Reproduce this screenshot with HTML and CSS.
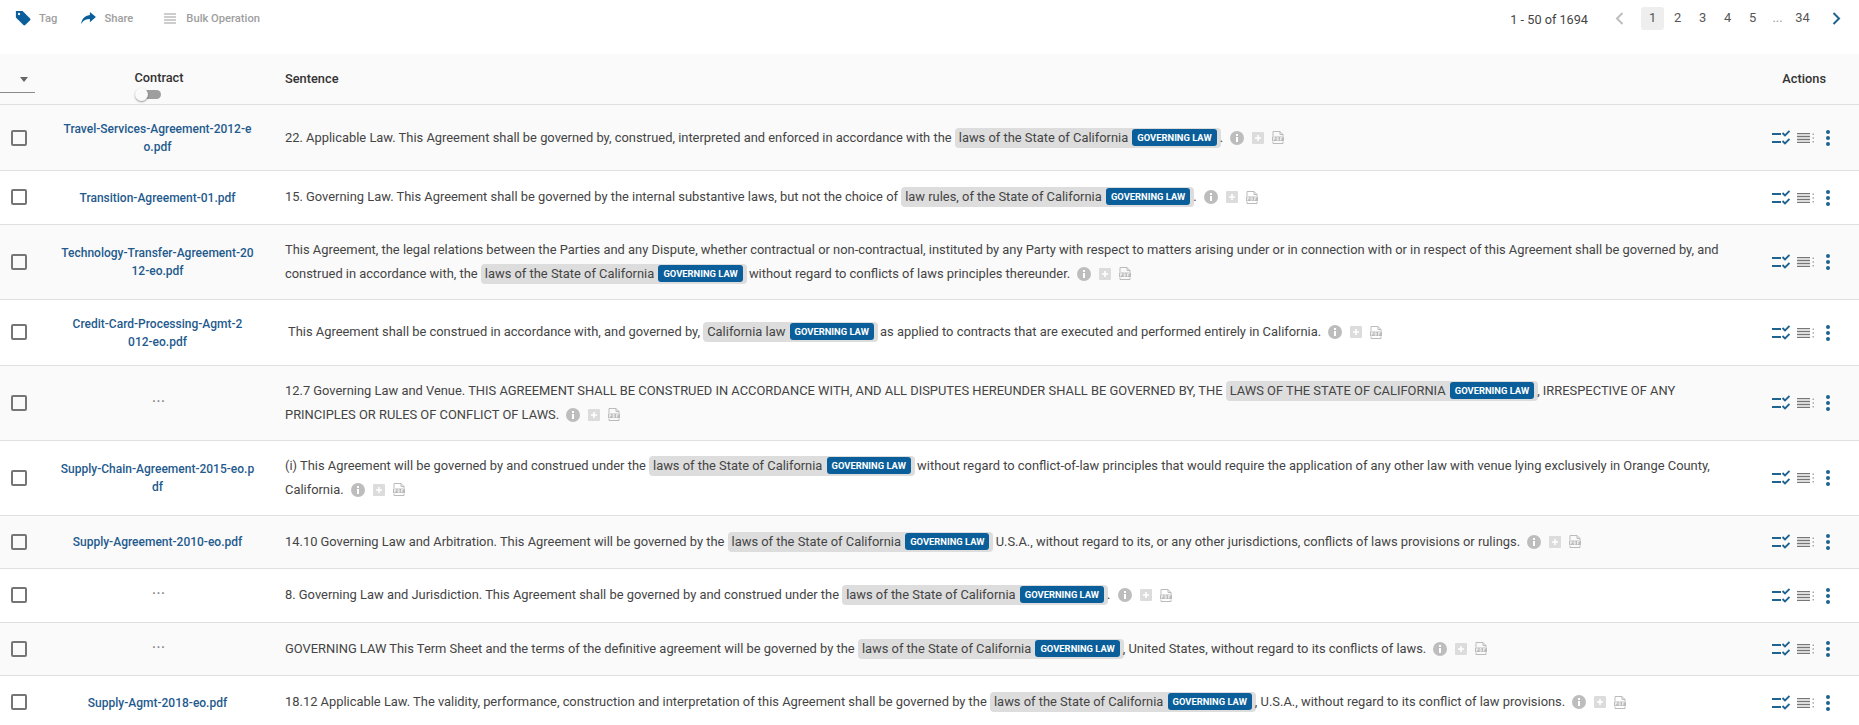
FILE: index.html
```html
<!DOCTYPE html>
<html lang="en">
<head>
    <meta charset="UTF-8">
    <meta name="viewport" content="width=device-width, initial-scale=1.0">
    <title>Contract Sentences</title>
    <link rel="stylesheet" href="styles.css">
</head>
<body>
    <svg class="defs" width="0" height="0">
        <symbol id="i-check" viewBox="0 0 18 16">
            <path d="M0 4h9M0 12h9" fill="none" stroke="currentColor" stroke-width="2"/>
            <path d="M10.500 3l2.500 2.500 4.500-4.500M10.500 11l2.500 2.500 4.500-4.500" fill="none" stroke="currentColor" stroke-width="1.800"/>
        </symbol>
        <symbol id="i-lines" viewBox="0 0 17 10">
            <path d="M0 .5h13M0 3.500h13M0 6.500h13M0 9.500h13" fill="none" stroke="#777" stroke-width="1.300"/>
            <path d="M15.500 .5h1.500v1.500h-1.500zM15.500 4.200h1.500v1.500h-1.500zM15.500 8h1.500v1.500h-1.500z" fill="#aaa"/>
        </symbol>
        <symbol id="i-dots" viewBox="0 0 6 16">
            <circle cx="3" cy="2" r="2" fill="currentColor"/>
            <circle cx="3" cy="8" r="2" fill="currentColor"/>
            <circle cx="3" cy="14" r="2" fill="currentColor"/>
        </symbol>
        <symbol id="i-info" viewBox="0 0 14 14">
            <circle cx="7" cy="7" r="7" fill="#bdbdbd"/>
            <path d="M6 6h2v5H6zM6 3h2v2H6z" fill="#fff"/>
        </symbol>
        <symbol id="i-plus" viewBox="0 0 12 12">
            <rect width="12" height="12" rx="1" fill="#dcdcdc"/>
            <path d="M6 3v6M3 6h6" stroke="#fff" stroke-width="1.600"/>
        </symbol>
        <symbol id="i-pdf" viewBox="0 0 12 13">
            <path d="M1 5V.5h7l3 3V5M1 10.500v2h10v-2M8 .5v3h3" fill="none" stroke="#bbb" stroke-width="1"/>
            <rect y="5.500" width="12" height="4.500" fill="#bbb"/>
            <path d="M1.500 6.500v3M1.500 6.700h1.500v1.200H1.500M5 6.500v2.700h1.200V6.700zM8.500 9.500v-3h2M8.500 8h1.500" fill="none" stroke="#fff" stroke-width=".7"/>
        </symbol>
    </svg>

    <div class="page">
        <div class="toolbar">
            <div class="tools">
                <span class="tool tool-tag">
                    <svg class="tool-icon" width="16" height="16" viewBox="0 0 18 18"><path d="M1 1h7.500l8.500 8.500a1.500 1.500 0 0 1 0 2L11.500 17a1.500 1.500 0 0 1-2 0L1 8.500zM4.500 3.200a1.300 1.300 0 1 0 .01 0z" fill="#0a5f9b" fill-rule="evenodd"/></svg>
                    Tag
                </span>
                <span class="tool tool-share">
                    <svg class="tool-icon" width="15" height="12" viewBox="0 0 16 13"><path d="M9.500 0L16 5.500 9.500 11V7.700C5.500 7.700 2.500 9 0 13 .7 8 3.500 4 9.500 3.300z" fill="#0a5f9b"/></svg>
                    Share
                </span>
                <span class="tool tool-bulk">
                    <svg class="tool-icon" width="12" height="11" viewBox="0 0 13 12"><path d="M0 1h13M0 4.300h13M0 7.600h13M0 11h13" stroke="#bdbdbd" stroke-width="1.600"/></svg>
                    Bulk Operation
                </span>
            </div>
            <div class="pager">
                <span class="pager-count">1 - 50 of 1694</span>
                <svg class="chev" width="9" height="13" viewBox="0 0 9 13"><path d="M7.500 1L2 6.500 7.500 12" fill="none" stroke="#bdbdbd" stroke-width="2"/></svg>
                <span class="page-no active">1</span>
                <span class="page-no">2</span>
                <span class="page-no">3</span>
                <span class="page-no">4</span>
                <span class="page-no">5</span>
                <span class="page-no faint">...</span>
                <span class="page-no">34</span>
                <svg class="chev chev-next" width="9" height="13" viewBox="0 0 9 13"><path d="M1.500 1L7 6.500 1.500 12" fill="none" stroke="#1f6391" stroke-width="2"/></svg>
            </div>
        </div>

        <table class="grid">
            <colgroup>
                <col class="col-check">
                <col class="col-contract">
                <col>
                <col class="col-actions">
            </colgroup>
            <thead>
                <tr>
                    <th class="head-select"><div class="select-box"><span class="caret"></span></div></th>
                    <th class="head-contract">
                        <div>Contract</div>
                        <span class="toggle"><span class="knob"></span></span>
                    </th>
                    <th class="head-sentence">Sentence</th>
                    <th class="head-actions">Actions</th>
                </tr>
            </thead>
            <tbody>
                <tr>
                    <td><span class="checkbox"></span></td>
                    <td class="file">Travel-Services-Agreement-2012-eo.pdf</td>
                    <td class="sentence">22. Applicable Law. This Agreement shall be governed by, construed, interpreted and enforced in accordance with the <span class="hit">laws of the State of California <span class="badge">GOVERNING LAW</span></span>. <span class="marks"><svg width="14" height="14"><use href="#i-info"/></svg><svg width="12" height="12"><use href="#i-plus"/></svg><svg width="12" height="13"><use href="#i-pdf"/></svg></span></td>
                    <td class="actions"><svg class="act" width="18" height="16"><use href="#i-check"/></svg><svg class="act-lines" width="17" height="10"><use href="#i-lines"/></svg><svg class="act-dots" width="6" height="16"><use href="#i-dots"/></svg></td>
                </tr>
                <tr>
                    <td><span class="checkbox"></span></td>
                    <td class="file">Transition-Agreement-01.pdf</td>
                    <td class="sentence">15. Governing Law. This Agreement shall be governed by the internal substantive laws, but not the choice of <span class="hit">law rules, of the State of California <span class="badge">GOVERNING LAW</span></span>. <span class="marks"><svg width="14" height="14"><use href="#i-info"/></svg><svg width="12" height="12"><use href="#i-plus"/></svg><svg width="12" height="13"><use href="#i-pdf"/></svg></span></td>
                    <td class="actions"><svg class="act" width="18" height="16"><use href="#i-check"/></svg><svg class="act-lines" width="17" height="10"><use href="#i-lines"/></svg><svg class="act-dots" width="6" height="16"><use href="#i-dots"/></svg></td>
                </tr>
                <tr>
                    <td><span class="checkbox"></span></td>
                    <td class="file">Technology-Transfer-Agreement-2012-eo.pdf</td>
                    <td class="sentence">This Agreement, the legal relations between the Parties and any Dispute, whether contractual or non-contractual, instituted by any Party with respect to matters arising under or in connection with or in respect of this Agreement shall be governed by, and construed in accordance with, the <span class="hit">laws of the State of California <span class="badge">GOVERNING LAW</span></span> without regard to conflicts of laws principles thereunder. <span class="marks"><svg width="14" height="14"><use href="#i-info"/></svg><svg width="12" height="12"><use href="#i-plus"/></svg><svg width="12" height="13"><use href="#i-pdf"/></svg></span></td>
                    <td class="actions"><svg class="act" width="18" height="16"><use href="#i-check"/></svg><svg class="act-lines" width="17" height="10"><use href="#i-lines"/></svg><svg class="act-dots" width="6" height="16"><use href="#i-dots"/></svg></td>
                </tr>
                <tr>
                    <td><span class="checkbox"></span></td>
                    <td class="file">Credit-Card-Processing-Agmt-2<br>012-eo.pdf</td>
                    <td class="sentence sentence-indent">This Agreement shall be construed in accordance with, and governed by, <span class="hit">California law <span class="badge">GOVERNING LAW</span></span> as applied to contracts that are executed and performed entirely in California. <span class="marks"><svg width="14" height="14"><use href="#i-info"/></svg><svg width="12" height="12"><use href="#i-plus"/></svg><svg width="12" height="13"><use href="#i-pdf"/></svg></span></td>
                    <td class="actions"><svg class="act" width="18" height="16"><use href="#i-check"/></svg><svg class="act-lines" width="17" height="10"><use href="#i-lines"/></svg><svg class="act-dots" width="6" height="16"><use href="#i-dots"/></svg></td>
                </tr>
                <tr>
                    <td><span class="checkbox"></span></td>
                    <td class="file no-name">...</td>
                    <td class="sentence">12.7 Governing Law and Venue. THIS AGREEMENT SHALL BE CONSTRUED IN ACCORDANCE WITH, AND ALL DISPUTES HEREUNDER SHALL BE GOVERNED BY, THE <span class="hit">LAWS OF THE STATE OF CALIFORNIA <span class="badge">GOVERNING LAW</span></span>, IRRESPECTIVE OF ANY PRINCIPLES OR RULES OF CONFLICT OF LAWS. <span class="marks"><svg width="14" height="14"><use href="#i-info"/></svg><svg width="12" height="12"><use href="#i-plus"/></svg><svg width="12" height="13"><use href="#i-pdf"/></svg></span></td>
                    <td class="actions"><svg class="act" width="18" height="16"><use href="#i-check"/></svg><svg class="act-lines" width="17" height="10"><use href="#i-lines"/></svg><svg class="act-dots" width="6" height="16"><use href="#i-dots"/></svg></td>
                </tr>
                <tr>
                    <td><span class="checkbox"></span></td>
                    <td class="file">Supply-Chain-Agreement-2015-eo.pdf</td>
                    <td class="sentence">(i) This Agreement will be governed by and construed under the <span class="hit">laws of the State of California <span class="badge">GOVERNING LAW</span></span> without regard to conflict-of-law principles that would require the application of any other law with venue lying exclusively in Orange County, California. <span class="marks"><svg width="14" height="14"><use href="#i-info"/></svg><svg width="12" height="12"><use href="#i-plus"/></svg><svg width="12" height="13"><use href="#i-pdf"/></svg></span></td>
                    <td class="actions"><svg class="act" width="18" height="16"><use href="#i-check"/></svg><svg class="act-lines" width="17" height="10"><use href="#i-lines"/></svg><svg class="act-dots" width="6" height="16"><use href="#i-dots"/></svg></td>
                </tr>
                <tr>
                    <td><span class="checkbox"></span></td>
                    <td class="file">Supply-Agreement-2010-eo.pdf</td>
                    <td class="sentence">14.10 Governing Law and Arbitration. This Agreement will be governed by the <span class="hit">laws of the State of California <span class="badge">GOVERNING LAW</span></span> U.S.A., without regard to its, or any other jurisdictions, conflicts of laws provisions or rulings. <span class="marks"><svg width="14" height="14"><use href="#i-info"/></svg><svg width="12" height="12"><use href="#i-plus"/></svg><svg width="12" height="13"><use href="#i-pdf"/></svg></span></td>
                    <td class="actions"><svg class="act" width="18" height="16"><use href="#i-check"/></svg><svg class="act-lines" width="17" height="10"><use href="#i-lines"/></svg><svg class="act-dots" width="6" height="16"><use href="#i-dots"/></svg></td>
                </tr>
                <tr>
                    <td><span class="checkbox"></span></td>
                    <td class="file no-name">...</td>
                    <td class="sentence">8. Governing Law and Jurisdiction. This Agreement shall be governed by and construed under the <span class="hit">laws of the State of California <span class="badge">GOVERNING LAW</span></span>. <span class="marks"><svg width="14" height="14"><use href="#i-info"/></svg><svg width="12" height="12"><use href="#i-plus"/></svg><svg width="12" height="13"><use href="#i-pdf"/></svg></span></td>
                    <td class="actions"><svg class="act" width="18" height="16"><use href="#i-check"/></svg><svg class="act-lines" width="17" height="10"><use href="#i-lines"/></svg><svg class="act-dots" width="6" height="16"><use href="#i-dots"/></svg></td>
                </tr>
                <tr>
                    <td><span class="checkbox"></span></td>
                    <td class="file no-name">...</td>
                    <td class="sentence">GOVERNING LAW This Term Sheet and the terms of the definitive agreement will be governed by the <span class="hit">laws of the State of California <span class="badge">GOVERNING LAW</span></span>, United States, without regard to its conflicts of laws. <span class="marks"><svg width="14" height="14"><use href="#i-info"/></svg><svg width="12" height="12"><use href="#i-plus"/></svg><svg width="12" height="13"><use href="#i-pdf"/></svg></span></td>
                    <td class="actions"><svg class="act" width="18" height="16"><use href="#i-check"/></svg><svg class="act-lines" width="17" height="10"><use href="#i-lines"/></svg><svg class="act-dots" width="6" height="16"><use href="#i-dots"/></svg></td>
                </tr>
                <tr>
                    <td><span class="checkbox"></span></td>
                    <td class="file">Supply-Agmt-2018-eo.pdf</td>
                    <td class="sentence">18.12 Applicable Law. The validity, performance, construction and interpretation of this Agreement shall be governed by the <span class="hit">laws of the State of California <span class="badge">GOVERNING LAW</span></span>, U.S.A., without regard to its conflict of law provisions. <span class="marks"><svg width="14" height="14"><use href="#i-info"/></svg><svg width="12" height="12"><use href="#i-plus"/></svg><svg width="12" height="13"><use href="#i-pdf"/></svg></span></td>
                    <td class="actions"><svg class="act" width="18" height="16"><use href="#i-check"/></svg><svg class="act-lines" width="17" height="10"><use href="#i-lines"/></svg><svg class="act-dots" width="6" height="16"><use href="#i-dots"/></svg></td>
                </tr>
            </tbody>
        </table>
    </div>
</body>
</html>
```
FILE: styles.css
```css
html, body {
    margin: 0;
    padding: 0;
    background-color: #fff;
}
body {
    font-family: Roboto, "Liberation Sans", sans-serif;
    font-size: 12.9px;
    color: #444;
}
.defs {
    position: absolute;
}
.page {
    height: 725px;
    overflow: hidden;
}

/* top bar */
.toolbar {
    display: flex;
    justify-content: space-between;
    align-items: flex-start;
    height: 54px;
}
.tools {
    display: flex;
    align-items: center;
    height: 36px;
    padding-left: 15px;
    color: #9e9e9e;
    font-size: 11.2px;
    font-weight: 500;
}
.tool {
    display: flex;
    align-items: center;
}
.tool-icon {
    flex: none;
}
.tool-tag .tool-icon {
    margin-right: 8px;
}
.tool-tag {
    margin-right: 24px;
}
.tool-share .tool-icon {
    margin-right: 8px;
}
.tool-share {
    margin-right: 31px;
}
.tool-bulk .tool-icon {
    margin-right: 10px;
}
.pager {
    display: flex;
    align-items: center;
    height: 36px;
    padding-right: 18px;
    color: #555;
}
.pager-count {
    margin: 2px 27px 0 0;
    color: #444;
    font-size: 12.7px;
}
.chev-next {
    margin-left: 17px;
}
.page-no {
    min-width: 25px;
    height: 23px;
    line-height: 22px;
    text-align: center;
    border-radius: 3px;
}
.page-no.active {
    min-width: 23px;
    margin: 0 1px 0 17px;
    background-color: #eee;
}
.page-no.faint {
    color: #999;
}

/* table */
.grid {
    width: 100%;
    border-collapse: collapse;
    table-layout: fixed;
}
.col-check {
    width: 50px;
}
.col-contract {
    width: 235px;
}
.col-actions {
    width: 129px;
}
.grid th {
    height: 50px;
    padding: 0;
    text-align: left;
    font-weight: 500;
    font-size: 12.8px;
    color: #333;
    background-color: #fafafa;
    border-bottom: 1px solid #e0e0e0;
}
.grid th.head-sentence, .grid th.head-actions {
    padding-bottom: 2px;
    height: 48px;
}
.grid th.head-contract {
    text-align: center;
    vertical-align: top;
    padding: 16px 17px 5px 0;
    height: 29px;
    line-height: 15px;
}
.grid th.head-actions {
    text-align: right;
    padding-right: 33px;
}
.grid th.head-select {
    vertical-align: top;
}
.select-box {
    width: 35px;
    height: 39px;
    border-bottom: 1px solid #8a8a8a;
    box-sizing: border-box;
    padding: 23px 0 0 20px;
}
.caret {
    display: block;
    width: 0;
    height: 0;
    border-left: 4px solid transparent;
    border-right: 4px solid transparent;
    border-top: 5px solid #666;
}
.toggle {
    display: block;
    position: relative;
    width: 18px;
    height: 9px;
    margin: 5px auto 0;
    left: -7px;
    background-color: #9e9e9e;
    border-radius: 5px;
}
.knob {
    position: absolute;
    left: -8px;
    top: -2px;
    width: 13px;
    height: 13px;
    background-color: #fafafa;
    border-radius: 50%;
    box-shadow: 0 1px 2px rgba(0, 0, 0, 0.4);
}
.grid td {
    height: 26.5px;
    padding: 13px 0;
    border-bottom: 1px solid #e0e0e0;
    vertical-align: middle;
    line-height: 24px;
}
.grid tbody tr:nth-child(odd) td {
    background-color: #fafafa;
}
.checkbox {
    display: block;
    width: 16px;
    height: 16px;
    margin-left: 11px;
    box-sizing: border-box;
    border: 2px solid #757575;
    border-radius: 2px;
}
.grid td.file {
    height: auto;
    padding: 15px 30px 14px 10px;
    text-align: center;
    font-size: 12px;
    font-weight: 500;
    line-height: 18px;
    color: #1f5b8e;
    word-break: break-all;
}
.grid td.no-name {
    padding: 8px 26px 18px 9px;
    color: #888;
    font-weight: 700;
    letter-spacing: 1px;
}
.sentence-indent {
    text-indent: 3px;
}
.hit {
    display: inline-block;
    vertical-align: top;
    height: 20px;
    margin: 2px -1px 0 0;
    line-height: 20px;
    padding: 0 4px;
    background-color: #ddd;
    border-radius: 4px;
    text-indent: 0;
}
.badge {
    display: inline-block;
    margin-left: 1px;
    padding: 0 5px;
    line-height: 17px;
    font-size: 9.4px;
    font-weight: 700;
    color: #fff;
    background-color: #0a5f9b;
    border-radius: 3px;
    vertical-align: top;
    margin-top: 1px;
}
.marks {
    display: inline-flex;
    align-items: center;
    gap: 8px;
    margin: 5px 0 0 4px;
    vertical-align: top;
}
.grid td.actions {
    text-align: right;
    padding-right: 28px;
    white-space: nowrap;
    color: #1f6391;
}
.actions svg {
    vertical-align: middle;
}
.act-lines {
    margin-left: 7px;
}
.act-dots {
    margin-left: 11px;
}
```
